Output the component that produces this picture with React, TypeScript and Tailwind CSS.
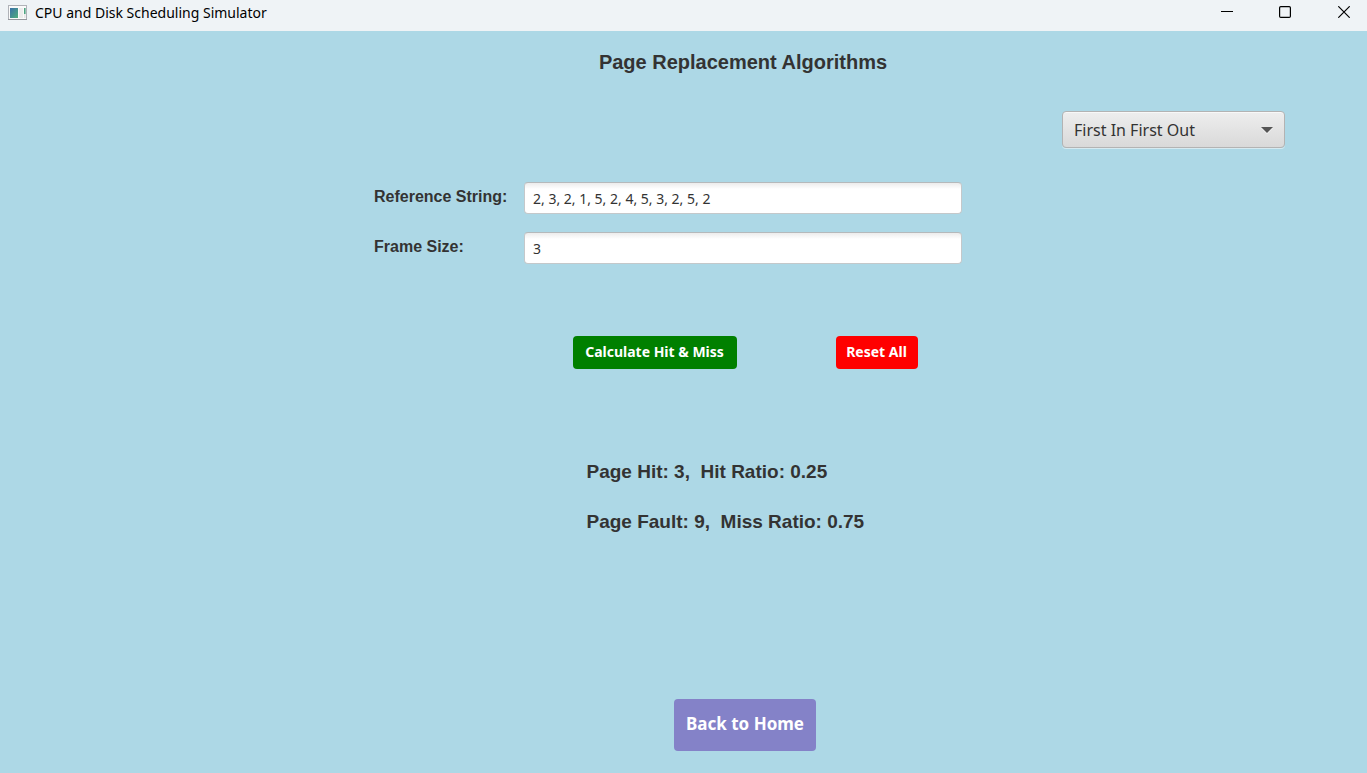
import { useState } from "react";

const ALGORITHMS = ["First In First Out", "Least Recently Used", "Optimal"];

function simulate(pages: number[], size: number, algorithm: string) {
  const frames: number[] = [];
  let hits = 0;
  pages.forEach((page, i) => {
    const at = frames.indexOf(page);
    if (at >= 0) {
      hits++;
      if (algorithm === "Least Recently Used") {
        frames.splice(at, 1);
        frames.push(page);
      }
      return;
    }
    if (frames.length >= size) {
      let victim = 0;
      if (algorithm === "Optimal") {
        const next = frames.map((f) => {
          const n = pages.indexOf(f, i + 1);
          return n < 0 ? Infinity : n;
        });
        victim = next.indexOf(Math.max(...next));
      }
      frames.splice(victim, 1);
    }
    frames.push(page);
  });
  return { hits, faults: pages.length - hits, total: pages.length };
}

function AppIcon() {
  return (
    <svg width="19" height="16" viewBox="0 0 19 16" aria-hidden="true">
      <defs>
        <linearGradient id="pane" x1="0" y1="0" x2="1" y2="1">
          <stop offset="0" stopColor="#3a6fa8" />
          <stop offset="1" stopColor="#4fae7c" />
        </linearGradient>
      </defs>
      <rect x="0.5" y="0.5" width="18" height="14" fill="#fafafa" stroke="#b0b2b8" />
      <path d="M0 14.5H19" stroke="#94969c" />
      <rect x="2" y="3" width="8" height="10" fill="url(#pane)" />
      <rect x="11" y="3" width="4" height="10" fill="#ececec" />
      <rect x="16" y="3" width="1.6" height="6" fill="#4ea582" />
      <rect x="16" y="9" width="1.6" height="4" fill="#e6e6e6" />
    </svg>
  );
}

function TitleBar() {
  return (
    <header className="flex h-[31px] items-start justify-between bg-[#eff3f6] pl-2">
      <div className="flex items-center gap-2 pt-[2px] font-['Noto_Sans',sans-serif] text-[14px] leading-[21px] text-black">
        <AppIcon />
        <span>CPU and Disk Scheduling Simulator</span>
      </div>
      <div className="flex h-6">
        <button type="button" aria-label="Minimize" className="flex w-[58px] items-center justify-center">
          <svg width="12" height="12" viewBox="0 0 12 12" stroke="#000" fill="none">
            <path d="M0 5.5H12" />
          </svg>
        </button>
        <button type="button" aria-label="Maximize" className="flex w-[58px] items-center justify-center">
          <svg width="12" height="12" viewBox="0 0 12 12" stroke="#000" fill="none" strokeWidth="1.2">
            <rect x="0.6" y="0.6" width="10.8" height="10.8" rx="1.2" />
          </svg>
        </button>
        <button type="button" aria-label="Close" className="flex w-[53px] items-center justify-center pl-[7px]">
          <svg width="12" height="12" viewBox="0 0 12 12" stroke="#000" fill="none" strokeWidth="1.2">
            <path d="M0.3 0.3L11.7 11.7M11.7 0.3L0.3 11.7" />
          </svg>
        </button>
      </div>
    </header>
  );
}

type FieldProps = { id: string; label: string; value: string; onChange: (v: string) => void };

function Field({ id, label, value, onChange }: FieldProps) {
  return (
    <>
      <label htmlFor={id} className="w-[150px] justify-self-end pb-[2px] text-[16px] font-bold leading-7">
        {label}
      </label>
      <input
        id={id}
        value={value}
        onChange={(e) => onChange(e.target.value)}
        className="h-8 w-full rounded-[4px] border border-[#c4c8ca] border-t-[#b5b9bb] bg-white bg-linear-to-b from-[#ececec] to-white to-20% px-2 font-['Noto_Sans',sans-serif] text-[14px] text-[#333] outline-none"
      />
      <span />
    </>
  );
}

export default function App() {
  const [algorithm, setAlgorithm] = useState(ALGORITHMS[0]);
  const [reference, setReference] = useState("2, 3, 2, 1, 5, 2, 4, 5, 3, 2, 5, 2");
  const [frameSize, setFrameSize] = useState("3");
  const [result, setResult] = useState<{ hits: number; faults: number; total: number } | null>({
    hits: 3,
    faults: 9,
    total: 12,
  });

  const calculate = () => {
    const pages = reference.split(",").map((s) => parseInt(s, 10)).filter((n) => !isNaN(n));
    const size = parseInt(frameSize, 10);
    setResult(pages.length && size > 0 ? simulate(pages, size, algorithm) : null);
  };

  const reset = () => {
    setReference("");
    setFrameSize("");
    setResult(null);
  };

  return (
    <div className="flex min-h-screen flex-col bg-[#add8e6] font-['Liberation_Sans',Arial,sans-serif] text-[#333]">
      <TitleBar />
      <main className="flex grow flex-col pl-[119px]">
        <h1 className="pt-4 text-center text-[20px] font-bold leading-[30px]">Page Replacement Algorithms</h1>

        <div className="mt-[34px] flex justify-end pr-[82px]">
          <div className="relative w-[223px]">
            <select
              aria-label="Algorithm"
              value={algorithm}
              onChange={(e) => setAlgorithm(e.target.value)}
              className="h-[37px] w-full appearance-none rounded-[4px] border border-[#b3b3b3] bg-linear-to-b from-[#eeeeee] to-[#d9d9d9] pr-9 pl-[11px] font-['Noto_Sans',sans-serif] text-[16px] text-[#333] shadow-[inset_0_1px_0_#f8f8f8,0_1px_0_#d5eaf1] outline-none"
            >
              {ALGORITHMS.map((a) => (
                <option key={a}>{a}</option>
              ))}
            </select>
            <svg className="pointer-events-none absolute top-4 right-3" width="12" height="7" viewBox="0 0 12 7" aria-hidden="true">
              <path d="M0 1H12L6 7Z" fill="#f5f5f5" />
              <path d="M0 0H12L6 6Z" fill="#555" />
            </svg>
          </div>
        </div>

        <div className="mt-[34px] grid grid-cols-[1fr_438px_1fr] items-center gap-y-[18px]">
          <Field id="reference" label="Reference String:" value={reference} onChange={setReference} />
          <Field id="frames" label="Frame Size:" value={frameSize} onChange={setFrameSize} />
        </div>

        <div className="mt-[72px] flex justify-center gap-[99px] pl-1 font-['Noto_Sans',sans-serif] text-[14px] font-bold text-white">
          <button type="button" onClick={calculate} className="h-[33px] w-[164px] rounded-[4px] bg-[#008000] pb-[2px]">
            Calculate Hit &amp; Miss
          </button>
          <button type="button" onClick={reset} className="h-[33px] w-[82px] rounded-[4px] bg-[#ff0000] pb-[2px]">
            Reset All
          </button>
        </div>

        <section
          aria-live="polite"
          className="mx-auto mt-[88px] flex min-h-20 w-[313px] flex-col gap-5 whitespace-pre text-[19px] font-bold leading-[30px]"
        >
          {result && (
            <>
              <p>{`Page Hit: ${result.hits},  Hit Ratio: ${(result.hits / result.total).toFixed(2)}`}</p>
              <p>{`Page Fault: ${result.faults},  Miss Ratio: ${(result.faults / result.total).toFixed(2)}`}</p>
            </>
          )}
        </section>

        <div className="mt-auto flex justify-center pb-[22px] pl-1">
          <button
            type="button"
            className="h-[52px] w-[142px] rounded-[4px] bg-[#8482c8] pb-[2px] font-['Noto_Sans',sans-serif] text-[17px] font-bold text-white"
          >
            Back to Home
          </button>
        </div>
      </main>
    </div>
  );
}
